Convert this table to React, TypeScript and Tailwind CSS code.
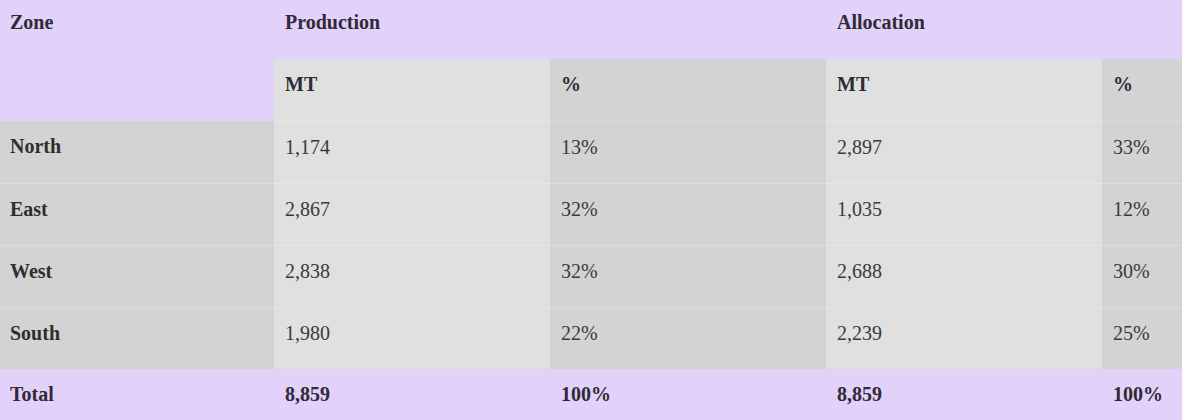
import React from 'react';

/* -------------------- Data -------------------- */
const rows = [
  { zone: 'North', prodMt: '1,174', prodPct: '13%', allocMt: '2,897', allocPct: '33%' },
  { zone: 'East', prodMt: '2,867', prodPct: '32%', allocMt: '1,035', allocPct: '12%' },
  { zone: 'West', prodMt: '2,838', prodPct: '32%', allocMt: '2,688', allocPct: '30%' },
  { zone: 'South', prodMt: '1,980', prodPct: '22%', allocMt: '2,239', allocPct: '25%' },
];

const cell = 'pl-[11px] pr-[10px] pt-[10px] pb-[21px] leading-[30px] text-left align-top';

/* -------------------- Component -------------------- */
export default function App() {
  return (
    <div
      className="w-[1182px] h-[420px] overflow-hidden bg-[#e2d1f8] text-[20px] text-[#3a3a3a]"
      style={{ fontFamily: '"Liberation Serif", "Times New Roman", serif' }}
    >
      <table className="table-fixed border-collapse w-[1378px]">
        <colgroup>
          <col className="w-[274px]" />
          <col className="w-[276px]" />
          <col className="w-[276px]" />
          <col className="w-[276px]" />
          <col className="w-[276px]" />
        </colgroup>
        <thead className="text-[#2e2a36]">
          <tr className="h-[59px]">
            <th rowSpan={2} className="pl-[10px] pt-[7px] leading-[30px] text-left align-top font-bold bg-[#e2d1f8]">
              Zone
            </th>
            <th colSpan={2} className="pl-[11px] pt-[7px] leading-[30px] text-left align-top font-bold bg-[#e2d1f8]">
              Production
            </th>
            <th colSpan={2} className="pl-[11px] pt-[7px] leading-[30px] text-left align-top font-bold bg-[#e2d1f8]">
              Allocation
            </th>
          </tr>
          <tr className="h-[62px]">
            <th className={`${cell} font-bold bg-[#e0e0e0] border-b border-[#e6e6e6]`}>MT</th>
            <th className={`${cell} font-bold bg-[#d3d3d3] border-b border-[#dcdcdc]`}>%</th>
            <th className={`${cell} font-bold bg-[#e0e0e0] border-b border-[#e6e6e6]`}>MT</th>
            <th className={`${cell} font-bold bg-[#d3d3d3] border-b border-[#dcdcdc]`}>%</th>
          </tr>
        </thead>
        <tbody>
          {rows.map((r, i) => {
            const last = i === rows.length - 1;
            const dark = last ? 'bg-[#d3d3d3]' : 'bg-[#d3d3d3] border-b border-[#dddddd]';
            const light = last ? 'bg-[#e0e0e0]' : 'bg-[#e0e0e0] border-b border-[#e6e6e6]';
            return (
              <tr key={r.zone} className="h-[62px]">
                <td className={`${cell} !pl-[10px] font-bold text-[#2e2e2e] ${dark}`}>{r.zone}</td>
                <td className={`${cell} ${light}`}>{r.prodMt}</td>
                <td className={`${cell} ${dark}`}>{r.prodPct}</td>
                <td className={`${cell} ${light}`}>{r.allocMt}</td>
                <td className={`${cell} ${dark}`}>{r.allocPct}</td>
              </tr>
            );
          })}
        </tbody>
        <tfoot className="text-[#2e2a36] font-bold">
          <tr className="h-[62px] bg-[#e2d1f8]">
            <td className={`${cell} !pl-[10px]`}>Total</td>
            <td className={cell}>8,859</td>
            <td className={cell}>100%</td>
            <td className={cell}>8,859</td>
            <td className={cell}>100%</td>
          </tr>
        </tfoot>
      </table>
    </div>
  );
}
